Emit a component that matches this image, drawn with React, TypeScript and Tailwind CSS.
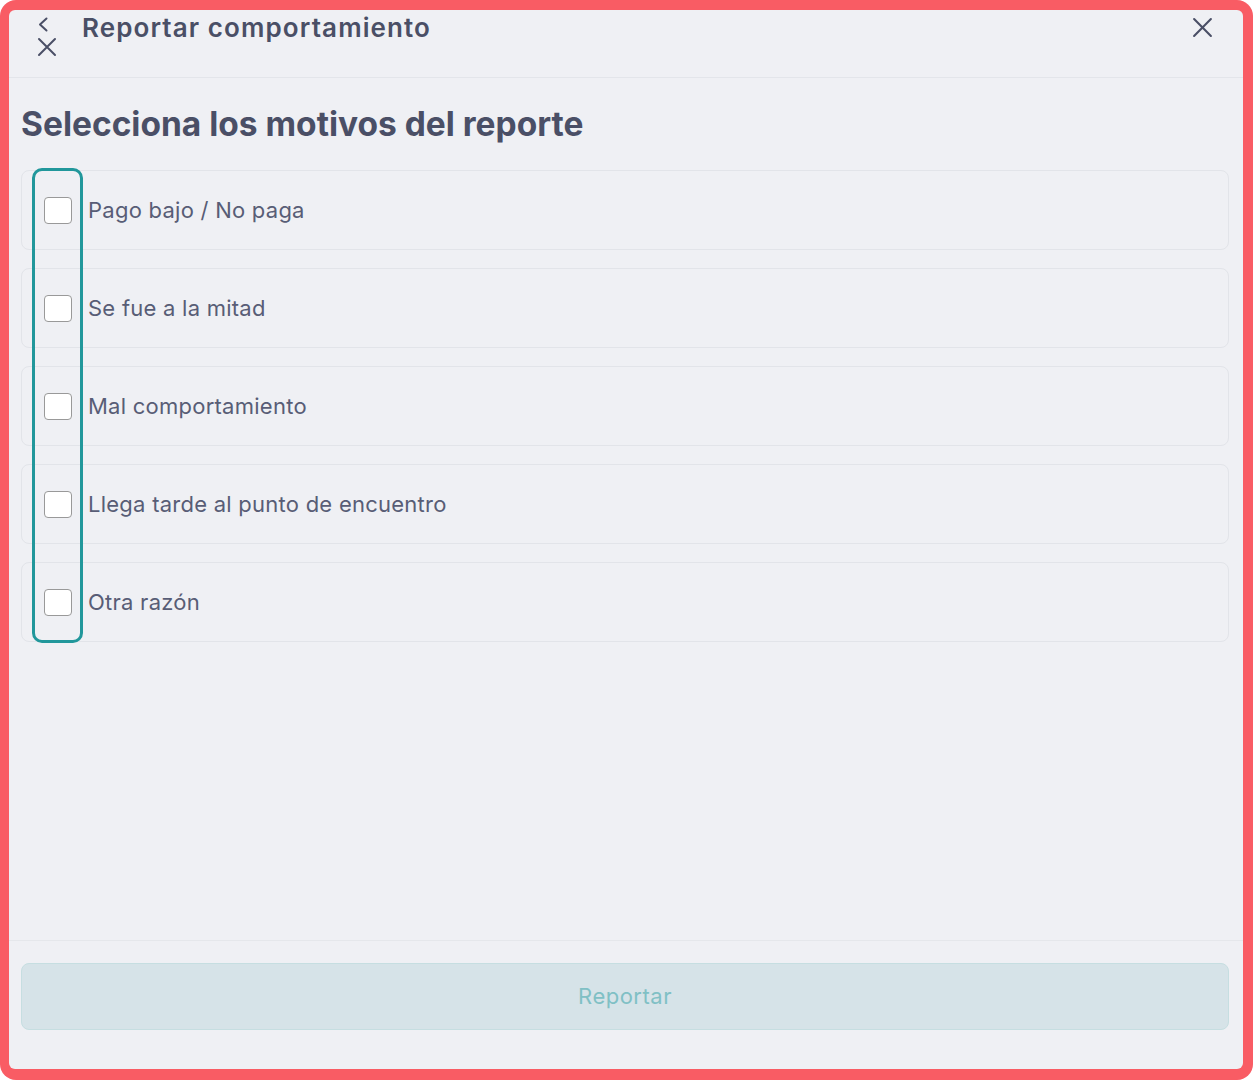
import React from 'react';

const reasons = [
  'Pago bajo / No paga',
  'Se fue a la mitad',
  'Mal comportamiento',
  'Llega tarde al punto de encuentro',
  'Otra razón',
];

function ChevronLeft() {
  return (
    <svg width="12" height="15" viewBox="0 0 12 15" fill="none">
      <path d="M9.5 1.5 L3 7.5 L9.5 13.5" stroke="#4a4f66" strokeWidth="2" strokeLinecap="round" strokeLinejoin="round" />
    </svg>
  );
}

function Cross({ size = 20 }: { size?: number }) {
  return (
    <svg width={size} height={size} viewBox="0 0 20 20" fill="none">
      <path d="M2 2 L18 18 M18 2 L2 18" stroke="#4a4f66" strokeWidth="2" strokeLinecap="round" />
    </svg>
  );
}

export default function App() {
  return (
    <div className="w-[1256px] h-[1080px] bg-white font-['Inter',sans-serif]">
      <div className="w-[1253px] h-[1080px] rounded-[16px] bg-[#f95c64] pl-[9px] pt-[10px] pr-[10px] pb-[11px]">
        <div className="flex h-full flex-col rounded-[6px] bg-[#eff0f4]">
          {/* Header */}
          <header className="flex h-[68px] shrink-0 items-start border-b border-[#e3e5ea] pl-[28px] pr-[30px]">
            <div className="flex w-[45px] flex-col items-start pt-[7px]">
              <ChevronLeft />
              <div className="mt-[5px]">
                <Cross size={20} />
              </div>
            </div>
            <h1 className="text-[26px] leading-[36px] font-semibold tracking-[1.1px] text-[#4a4f66]">
              Reportar comportamiento
            </h1>
            <button className="ml-auto mt-[7px]">
              <Cross size={21} />
            </button>
          </header>

          {/* Body */}
          <main className="flex-1 pl-[12px] pr-[14px] pt-[26px]">
            <h2 className="text-[33.5px] leading-[40px] font-bold text-[#4a4f66]">
              Selecciona los motivos del reporte
            </h2>
            <div className="relative mt-[26px] flex flex-col gap-[18px]">
              {reasons.map((r) => (
                <label
                  key={r}
                  className="flex h-[80px] items-center gap-[16px] rounded-[8px] border border-[#e2e4e9] pl-[22px]"
                >
                  <span className="h-[27px] w-[28px] rounded-[4px] border-[1.5px] border-[#999999] bg-white" />
                  <span className="text-[22px] tracking-[0.25px] text-[#585d76]">{r}</span>
                </label>
              ))}
              <div className="pointer-events-none absolute left-[11px] top-[-2px] h-[475px] w-[51px] rounded-[10px] border-[3px] border-[#21979b]" />
            </div>
          </main>

          {/* Footer */}
          <footer className="h-[129px] shrink-0 border-t border-[#e5e7eb] pl-[12px] pr-[14px] pt-[22px]">
            <button className="flex h-[67px] w-full items-center justify-center rounded-[8px] border-[1.5px] border-[#c6dee1] bg-[#d6e3e8] text-[22px] tracking-[0.5px] text-[#80c0c5]">
              Reportar
            </button>
          </footer>
        </div>
      </div>
    </div>
  );
}
